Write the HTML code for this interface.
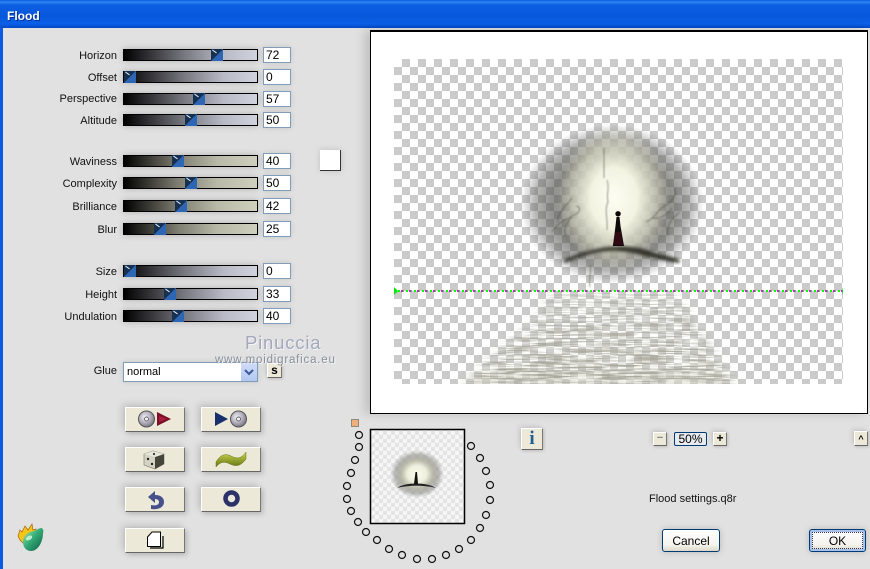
<!DOCTYPE html>
<html><head><meta charset="utf-8"><title>Flood</title>
<style>
html,body{margin:0;padding:0}
body{width:870px;height:569px;overflow:hidden;background:#e1e1e1;position:relative;font:11px "Liberation Sans",sans-serif;color:#000}
.a{position:absolute}
#t{left:0;top:0;width:870px;height:28px;background:linear-gradient(#0a5ae0 0,#2f86f2 2px,#0d5fe2 5px,#0857dc 16px,#0a5fe6 24px,#0447c4 28px)}
#t b{position:absolute;left:7px;top:9px;font-size:12px;color:#fff;text-shadow:1px 1px 0 #0a2f90}
#l{left:0;top:28px;width:3px;height:541px;background:#0a5ae6}
.lb{position:absolute;width:117px;left:0;text-align:right;height:14px;line-height:14px;color:#111;margin-top:1px}
.s{position:absolute;left:123px;width:133px;height:10px;border:1px solid #000;box-shadow:0 0 7px rgba(0,0,0,.22)}
.g1{background:linear-gradient(90deg,#000,#77777f 45%,#b8bac6 75%,#d0d2de)}
.g2{background:linear-gradient(90deg,#000,#7c7c70 40%,#b9b9a7 70%,#cfcfbd)}
.th{position:absolute;width:12px;height:12px;background:linear-gradient(135deg,#16304f 50%,#2c66b4 50%)}
.th:after{content:"";position:absolute;left:1px;top:2px;width:5px;height:1px;background:#dfe8f5;transform:rotate(35deg)}
.i{position:absolute;left:263px;height:14px;line-height:15px;border:1px solid #7f9db9;background:#fff;font-size:12px;padding-left:2px;width:24px;box-shadow:0 0 6px rgba(0,0,0,.12)}
.b{position:absolute;width:60px;height:25px;background:#ece9d8;border-top:1px solid #fff;border-left:1px solid #fff;border-right:1px solid #777;border-bottom:1px solid #666;box-sizing:border-box;box-shadow:-3px -3px 7px rgba(0,0,0,.13),2px 2px 5px rgba(0,0,0,.18)}
.b svg{position:absolute;left:0;top:0}
.m{position:absolute;box-sizing:border-box;background:#ece9d8;border-top:1px solid #fff;border-left:1px solid #fff;border-right:1px solid #777;border-bottom:1px solid #666;text-align:center;box-shadow:-2px -2px 5px rgba(0,0,0,.1),1px 1px 3px rgba(0,0,0,.15)}
.x{position:absolute;box-sizing:border-box;border:1px solid #003c74;border-radius:3px;background:linear-gradient(#fff,#f4f3ee 70%,#dcd8c8);text-align:center;font-size:12px;box-shadow:0 0 7px rgba(0,0,0,.18)}
</style></head><body>
<div class="a" id="t"><b>Flood</b></div>
<div class="a" id="l"></div>

<div class="lb" style="top:48px">Horizon</div>
<div class="s g1" style="top:49px"><div class="th" style="left:87px;top:-1px"></div></div><div class="i" style="top:47px">72</div>
<div class="lb" style="top:70px">Offset</div>
<div class="s g1" style="top:71px"><div class="th" style="left:0;top:-1px"></div></div><div class="i" style="top:69px">0</div>
<div class="lb" style="top:91px">Perspective</div>
<div class="s g1" style="top:93px"><div class="th" style="left:69px;top:-1px"></div></div><div class="i" style="top:91px">57</div>
<div class="lb" style="top:113px">Altitude</div>
<div class="s g1" style="top:114px"><div class="th" style="left:61px;top:-1px"></div></div><div class="i" style="top:112px">50</div>

<div class="lb" style="top:154px">Waviness</div>
<div class="s g2" style="top:155px"><div class="th" style="left:48px;top:-1px"></div></div><div class="i" style="top:153px">40</div>
<div class="lb" style="top:176px">Complexity</div>
<div class="s g2" style="top:177px"><div class="th" style="left:61px;top:-1px"></div></div><div class="i" style="top:175px">50</div>
<div class="lb" style="top:199px">Brilliance</div>
<div class="s g2" style="top:200px"><div class="th" style="left:51px;top:-1px"></div></div><div class="i" style="top:198px">42</div>
<div class="lb" style="top:222px">Blur</div>
<div class="s g2" style="top:223px"><div class="th" style="left:30px;top:-1px"></div></div><div class="i" style="top:221px">25</div>

<div class="lb" style="top:264px">Size</div>
<div class="s g1" style="top:265px"><div class="th" style="left:0;top:-1px"></div></div><div class="i" style="top:263px">0</div>
<div class="lb" style="top:287px">Height</div>
<div class="s g1" style="top:288px"><div class="th" style="left:40px;top:-1px"></div></div><div class="i" style="top:286px">33</div>
<div class="lb" style="top:309px">Undulation</div>
<div class="s g1" style="top:310px"><div class="th" style="left:48px;top:-1px"></div></div><div class="i" style="top:308px">40</div>

<div class="a" style="left:320px;top:150px;width:21px;height:21px;box-sizing:border-box;background:#fff;border-right:1px solid #333;border-bottom:1px solid #333;box-shadow:0 0 6px rgba(0,0,0,.15)"></div>

<div class="a" style="left:370px;top:30px;width:498px;height:384px;box-sizing:border-box;background:#fff;border:1px solid #000;border-top-width:2px;box-shadow:-6px 0 9px rgba(0,0,0,.14)"></div>

<svg class="a" style="left:0;top:0" width="870" height="569" viewBox="0 0 870 569">
<defs>
<pattern id="ck" x="394" y="59" width="16" height="16" patternUnits="userSpaceOnUse"><rect width="16" height="16" fill="#fff"/><rect x="8" width="8" height="8" fill="#cbcbcb"/><rect y="8" width="8" height="8" fill="#cbcbcb"/></pattern>
<pattern id="ck2" x="371" y="431" width="8" height="8" patternUnits="userSpaceOnUse"><rect width="8" height="8" fill="#f6f6f6"/><rect x="4" width="4" height="4" fill="#e4e4e4"/><rect y="4" width="4" height="4" fill="#e4e4e4"/></pattern>
<radialGradient id="hl"><stop offset="0" stop-color="#50504a" stop-opacity=".55"/><stop offset=".66" stop-color="#50504a" stop-opacity=".62"/><stop offset=".84" stop-color="#505050" stop-opacity=".4"/><stop offset="1" stop-color="#666" stop-opacity="0"/></radialGradient>
<radialGradient id="cr"><stop offset="0" stop-color="#fdfdf3"/><stop offset=".42" stop-color="#f6f6e4" stop-opacity=".97"/><stop offset=".72" stop-color="#e2e2cc" stop-opacity=".62"/><stop offset="1" stop-color="#d4d4bc" stop-opacity="0"/></radialGradient>
<radialGradient id="gl2"><stop offset="0" stop-color="#fbfbee"/><stop offset=".36" stop-color="#eeeedc"/><stop offset=".6" stop-color="#b0b0a0" stop-opacity=".88"/><stop offset=".82" stop-color="#80807c" stop-opacity=".5"/><stop offset="1" stop-color="#999" stop-opacity="0"/></radialGradient>
<filter id="wn" x="0" y="0" width="100%" height="100%"><feTurbulence type="fractalNoise" baseFrequency="0.018 0.42" numOctaves="2" seed="7"/><feColorMatrix type="matrix" values="0 0 0 0 .93  0 0 0 0 .93  0 0 0 0 .87  2 0 0 0 -.74"/></filter>
<filter id="wd" x="0" y="0" width="100%" height="100%"><feTurbulence type="fractalNoise" baseFrequency="0.03 0.55" numOctaves="2" seed="3"/><feColorMatrix type="matrix" values="0 0 0 0 .38  0 0 0 0 .38  0 0 0 0 .32  0 4.400 0 0 -1.80"/></filter>
<filter id="bl4"><feGaussianBlur stdDeviation="5"/></filter>
<filter id="bl1"><feGaussianBlur stdDeviation=".7"/></filter>
<filter id="bl08"><feGaussianBlur stdDeviation="1.500"/></filter>
<linearGradient id="wf" x1="0" y1="0" x2="0" y2="1"><stop offset="0" stop-color="#fff" stop-opacity=".45"/><stop offset=".5" stop-color="#fff" stop-opacity=".75"/><stop offset="1" stop-color="#fff"/></linearGradient>
<mask id="wm" maskUnits="userSpaceOnUse" x="394" y="291" width="449" height="93"><polygon points="555,291 675,291 695,325 712,350 735,384 462,384 500,350 530,325" fill="url(#wf)" filter="url(#bl4)"/></mask>
<linearGradient id="wg" x1="0" y1="0" x2="0" y2="1"><stop offset="0" stop-color="#f5f5e6" stop-opacity=".4"/><stop offset=".4" stop-color="#efefe0" stop-opacity=".05"/><stop offset=".8" stop-color="#d6d6c4" stop-opacity=".12"/><stop offset="1" stop-color="#cfcfba" stop-opacity=".85"/></linearGradient>
<radialGradient id="cd" cx=".4" cy=".38" r=".7"><stop offset="0" stop-color="#eeeef4"/><stop offset=".45" stop-color="#bdb6c4"/><stop offset="1" stop-color="#6c6c78"/></radialGradient>
<linearGradient id="gr" x1="0" y1="0" x2="0" y2="1"><stop offset="0" stop-color="#cbd648"/><stop offset="1" stop-color="#66741a"/></linearGradient>
<linearGradient id="mg" x1="0" y1="0" x2="1" y2="1"><stop offset="0" stop-color="#b4ecb8"/><stop offset=".45" stop-color="#35ae78"/><stop offset="1" stop-color="#0c5a44"/></linearGradient>
</defs>

<!-- main preview -->
<rect x="394" y="59" width="449" height="325" fill="url(#ck)"/>
<g mask="url(#wm)"><rect x="394" y="291" width="449" height="93" fill="url(#wg)"/><rect x="394" y="291" width="449" height="93" filter="url(#wn)"/><rect x="394" y="291" width="449" height="93" filter="url(#wd)"/></g>
<ellipse cx="612" cy="204" rx="92" ry="80" fill="url(#hl)"/>
<ellipse cx="614" cy="198" rx="56" ry="72" fill="url(#cr)"/>
<g fill="none" stroke="#4a4a40" stroke-width="1" opacity=".55" filter="url(#bl1)">
<path d="M552 232c6-10 14-12 22-17 6-2 8-8 2-9M558 222c-2-8 8-16 14-24M566 236c-4-8 2-14 6-20"/>
<path d="M646 222c10-4 10-12 22-18 6-6 10-10 6-16M652 218c8 2 16-4 20-10M668 236c-2-10 4-18 12-24"/>
<path d="M607 180c3 8-1 14 1 22-4 8 0 16-1 28M590 265c2 8-2 14 0 22M604 148v30"/>
</g>
<path d="M563 260c10-5 24-9 38-12 20-3 36-2 52 4 10 4 18 3 27 8l-1 3c-14-2-26-5-38-8-18-5-36-5-50-1-8 2-16 5-26 9z" fill="#2c2c24" opacity=".9" filter="url(#bl08)"/>
<path d="M618 216.500a2.700 2.700 0 1 1 .1 0zM616.500 217h3l1 9 3.500 20h-11l2.500-20z" fill="#0e0a0c"/>
<path d="M615 232l-2 13h10l-2-13z" fill="#2e0a12"/>

<!-- horizon line -->
<line x1="394" y1="291" x2="843" y2="291" stroke="#00ff00" stroke-width="2" stroke-dasharray="2 2"/>
<line x1="401" y1="291" x2="843" y2="291" stroke="#ff00ff" stroke-width="2" stroke-dasharray="2 6"/>
<path d="M394 287l4 4-4 4zM843 287v8l-1-4z" fill="#00e800"/>

<!-- thumbnail -->
<rect x="370.500" y="429.500" width="94" height="94" fill="url(#ck2)" stroke="#000" stroke-width="1.500"/>
<ellipse cx="417" cy="474" rx="27" ry="24" fill="url(#gl2)"/>
<path d="M397 488c8-6 30-6 39 0-10-3-29-3-39 0z" fill="#222"/>
<path d="M415.500 472h1.500l1 12h-4z" fill="#111"/>

<!-- frames -->
<rect x="351.500" y="419.500" width="7" height="7" fill="#f2b078" stroke="#8a8a80"/>
<g fill="#e1e1e1" stroke="#111" stroke-width="1.200">
<circle cx="359" cy="435" r="3.500"/><circle cx="359" cy="447" r="3.500"/><circle cx="355" cy="460" r="3.500"/><circle cx="351" cy="473" r="3.500"/><circle cx="347" cy="486" r="3.500"/><circle cx="347" cy="499" r="3.500"/><circle cx="351" cy="511" r="3.500"/><circle cx="358" cy="522" r="3.500"/><circle cx="366" cy="532" r="3.500"/><circle cx="377" cy="540" r="3.500"/><circle cx="389" cy="549" r="3.500"/><circle cx="402" cy="555" r="3.500"/><circle cx="417" cy="559" r="3.500"/><circle cx="432" cy="559" r="3.500"/><circle cx="446" cy="555" r="3.500"/><circle cx="459" cy="549" r="3.500"/><circle cx="471" cy="540" r="3.500"/><circle cx="480" cy="528" r="3.500"/><circle cx="486" cy="515" r="3.500"/><circle cx="490" cy="500" r="3.500"/><circle cx="490" cy="485" r="3.500"/><circle cx="486" cy="471" r="3.500"/><circle cx="480" cy="458" r="3.500"/><circle cx="471" cy="446" r="3.500"/>
</g>

<!-- logo -->
<path d="M18 536l2-6 2 2 3-6 3 4 4-6 1 6 3-1-1 5-12 9-3-3z" fill="#f5c518" stroke="#a8640e" stroke-width=".7"/>
<path d="M23 542c0-6 5-10 11-11 3-1 5-3 7-3s3 3 2 5c0 9-5 18-12 18-5 0-8-4-8-9z" fill="url(#mg)"/>
<ellipse cx="29" cy="538" rx="3.500" ry="2" fill="#dff6de" opacity=".8" transform="rotate(-30 29 538)"/>
</svg>

<div class="lb" style="top:363px">Glue</div>
<div class="a" style="left:123px;top:362px;width:135px;height:20px;box-sizing:border-box;border:1px solid #7f9db9;background:#fff;line-height:18px;padding-left:3px;font-size:11px;box-shadow:0 0 5px rgba(0,0,0,.12)">normal</div>
<div class="a" style="left:241px;top:363px;width:16px;height:18px;background:linear-gradient(#cfdcf8,#b2c8f2)"><svg width="16" height="18"><path d="M4 7l4 4 4-4" fill="none" stroke="#3a5a96" stroke-width="2"/></svg></div>
<div class="m" style="left:267px;top:363px;width:15px;height:15px;font:bold 12px/12px 'Liberation Sans',sans-serif">s</div>

<div class="a" style="left:245px;top:331px;font-size:18.500px;line-height:24px;letter-spacing:.8px;color:#a4a8bc;text-shadow:1px 1px 0 #f4f4f4">Pinuccia</div>
<div class="a" style="left:215px;top:353px;font-size:11.500px;line-height:14px;letter-spacing:.8px;color:#8a8e9c;text-shadow:1px 1px 0 #f2f2f2">www.moidigrafica.eu</div>

<div class="b" style="left:125px;top:407px"><svg width="58" height="23"><circle cx="20.500" cy="11" r="8" fill="url(#cd)" stroke="#555"/><circle cx="20.500" cy="11" r="2" fill="#eee" stroke="#444" stroke-width=".7"/><path d="M31 4l14 7-14 7z" fill="#7c1029"/><path d="M33 8l8 3-8 3z" fill="#a81c3c"/></svg></div>
<div class="b" style="left:201px;top:407px"><svg width="58" height="23"><path d="M13 4l13 7-13 7z" fill="#16306e"/><circle cx="36.500" cy="11" r="8" fill="url(#cd)" stroke="#555"/><circle cx="36.500" cy="11" r="2" fill="#eee" stroke="#444" stroke-width=".7"/></svg></div>
<div class="b" style="left:125px;top:447px"><svg width="58" height="23"><path d="M18 6l9-3 11 3v10l-9 5-11-4z" fill="#d4d2c2" stroke="#77776a" stroke-width=".6"/><path d="M29 9v12l9-5V6z" fill="#45453c"/><path d="M18 6l9-3 11 3-9 3z" fill="#e8e6da"/><circle cx="22" cy="11" r="1.200" fill="#222"/><circle cx="26" cy="16" r="1.200" fill="#222"/><circle cx="28" cy="6" r="1.100" fill="#333"/></svg></div>
<div class="b" style="left:201px;top:447px"><svg width="58" height="23"><path d="M14 14c4-7 9-9 15-6s10 3 15-4v7c-5 7-10 8-16 5s-10-2-14 3z" fill="url(#gr)" stroke="#66741a" stroke-width=".5"/></svg></div>
<div class="b" style="left:125px;top:487px"><svg width="58" height="23"><path d="M22 9l7-6v4c6 0 9 3 9 7 0 5-5 8-13 7v-4c5 1 8 0 8-3 0-2-2-3-4-3v4z" fill="#47508c"/></svg></div>
<div class="b" style="left:201px;top:487px"><svg width="58" height="23"><circle cx="29.500" cy="10.500" r="6" fill="none" stroke="#2c3168" stroke-width="4.500"/></svg></div>
<div class="b" style="left:125px;top:528px"><svg width="58" height="23"><path d="M24 19h13V7" fill="none" stroke="#000" stroke-width="1.200"/><path d="M21.500 17.500V8l4.500-5h8.500v14.500z" fill="#fff" stroke="#000"/></svg></div>

<div class="m" style="left:521px;top:428px;width:22px;height:22px;font:bold 19px/20px 'Liberation Serif',serif;color:#1f5f92">i</div>
<div class="m" style="left:653px;top:432px;width:14px;height:14px;font:bold 11px/10px 'Liberation Sans',sans-serif;color:#888">−</div>
<div class="x" style="left:674px;top:432px;width:33px;height:14px;line-height:13px;border-radius:2px;background:#e8ebee;box-shadow:none">50%</div>
<div class="m" style="left:713px;top:432px;width:14px;height:14px;font:bold 12px/11px 'Liberation Sans',sans-serif">+</div>
<div class="m" style="left:854px;top:431px;width:14px;height:15px;font:bold 9px/14px 'Liberation Sans',sans-serif">^</div>
<div class="a" style="left:649px;top:492px;line-height:14px;font-size:11px;color:#111">Flood settings.q8r</div>
<div class="x" style="left:662px;top:529px;width:58px;height:23px;line-height:23px">Cancel</div>
<div class="x" style="left:809px;top:529px;width:57px;height:23px;line-height:23px;box-shadow:inset 0 0 0 2px #a8c0ec,0 0 7px rgba(0,0,0,.18)">OK</div>
<div class="a" style="left:812px;top:532px;width:49px;height:15px;border:1px dotted #334"></div>
</body></html>
